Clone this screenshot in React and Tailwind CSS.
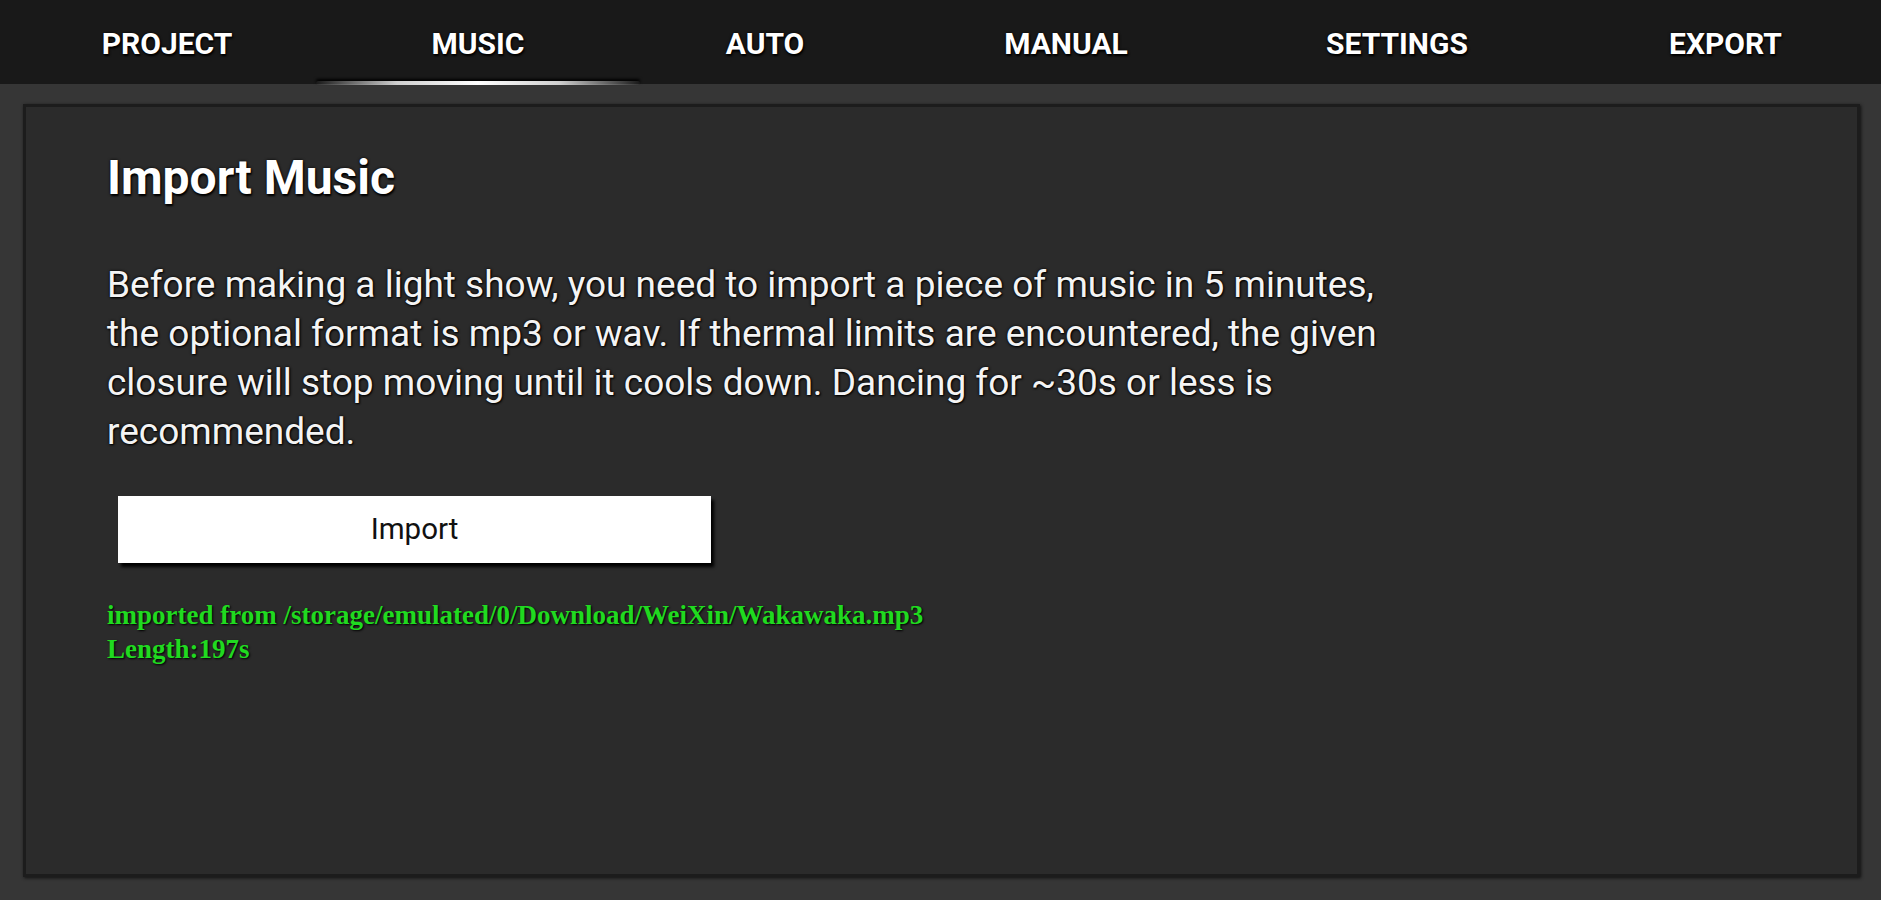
import React from "react";

const tabs = [
  { label: "PROJECT", w: "w-[334px]" },
  { label: "MUSIC", w: "w-[288px]", active: true },
  { label: "AUTO", w: "w-[286px]" },
  { label: "MANUAL", w: "w-[316px]" },
  { label: "SETTINGS", w: "w-[346px]" },
  { label: "EXPORT", w: "w-[311px]" },
];

export default function App() {
  return (
    <div className="w-[1881px] h-[900px] bg-[#363636] flex flex-col font-['Roboto',sans-serif] overflow-hidden">
      <nav className="h-[84px] shrink-0 bg-[#191919] flex items-stretch">
        {tabs.map((t) => (
          <div key={t.label} className={`${t.w} relative flex items-center justify-center pt-[4px]`}>
            <span className="text-white font-bold text-[30px] leading-none [text-shadow:0_0_3px_#000,1px_2px_2px_#000]">
              {t.label}
            </span>
            {t.active && (
              <div className="absolute bottom-[-1px] left-1/2 -translate-x-1/2 w-[324px] h-[4px] rounded-full bg-[linear-gradient(90deg,transparent,#cfcfcf_25%,#ffffff_50%,#cfcfcf_75%,transparent)] shadow-[0_-2px_3px_#000]" />
            )}
          </div>
        ))}
      </nav>
      <div className="flex-1 pt-[20px] pl-[23px] pr-[21px] pb-[23px] flex">
        <main className="flex-1 bg-[#2b2b2b] border-[3px] border-[#1c1c1c] shadow-[1px_1px_3px_#111] pl-[81px] pt-[47px]">
          <h1 className="text-white font-bold text-[48px] leading-[48px] [text-shadow:0_0_3px_#000,1px_2px_2px_#000]">
            Import Music
          </h1>
          <p className="mt-[58px] text-[#f4f4f4] text-[37px] leading-[49px] whitespace-nowrap [text-shadow:0_0_3px_#000,1px_1px_2px_#000]">
            Before making a light show, you need to import a piece of music in 5 minutes,
            <br />
            the optional format is mp3 or wav. If thermal limits are encountered, the given
            <br />
            closure will stop moving until it cools down. Dancing for ~30s or less is
            <br />
            recommended.
          </p>
          <button className="mt-[40px] ml-[11px] w-[593px] h-[67px] bg-white text-[#111] text-[29.5px] shadow-[3px_4px_3px_#000] flex items-center justify-center">
            Import
          </button>
          <div className="mt-[35px] font-['Liberation_Serif',serif] font-bold text-[27px] leading-[34px] text-[#20da20] [text-shadow:1px_1px_2px_#000]">
            <div>imported from /storage/emulated/0/Download/WeiXin/Wakawaka.mp3</div>
            <div>Length:197s</div>
          </div>
        </main>
      </div>
    </div>
  );
}
